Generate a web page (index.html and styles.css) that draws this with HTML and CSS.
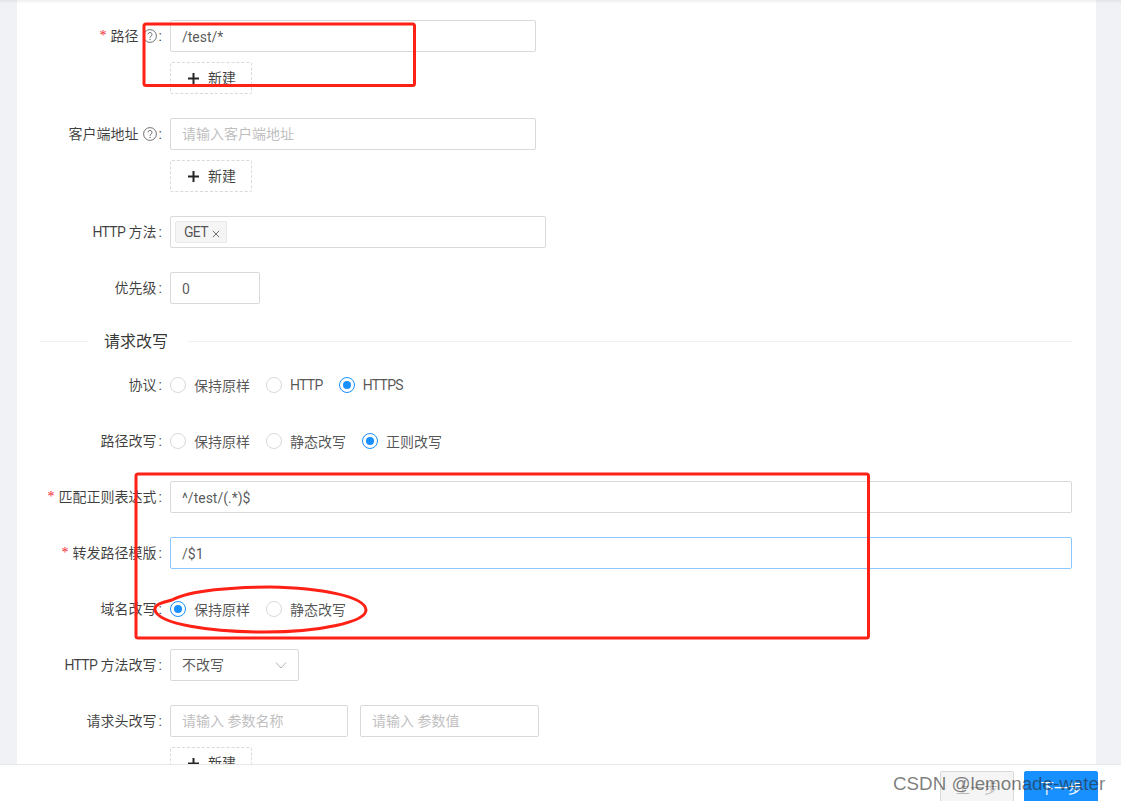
FILE: index.html
```html
<!DOCTYPE html>
<html lang="zh-CN">
<head>
<meta charset="utf-8">
<title>路由配置</title>
<link rel="stylesheet" href="styles.css">
</head>
<body>
<div class="page">
  <main class="main">
    <form class="form">
      <div class="row">
        <div class="label"><span class="req">*</span>路径<svg class="help" viewBox="0 0 14 14"><circle cx="7" cy="7" r="6.4"/><path d="M5 5.4a2 2 0 1 1 3 1.8c-.7.4-1 .8-1 1.6"/><circle class="dot" cx="7" cy="10.4" r=".7"/></svg><span class="colon">:</span></div>
        <div class="control">
          <div class="input w366 val">/test/*</div>
          <div class="add"><svg class="plus" viewBox="0 0 11 11"><path d="M5.500 0v11M0 5.500h11"/></svg><span class="add-text">新建</span></div>
        </div>
      </div>
      <div class="row">
        <div class="label">客户端地址<svg class="help" viewBox="0 0 14 14"><circle cx="7" cy="7" r="6.4"/><path d="M5 5.4a2 2 0 1 1 3 1.8c-.7.4-1 .8-1 1.6"/><circle class="dot" cx="7" cy="10.4" r=".7"/></svg><span class="colon">:</span></div>
        <div class="control">
          <div class="input w366 ph">请输入客户端地址</div>
          <div class="add"><svg class="plus" viewBox="0 0 11 11"><path d="M5.500 0v11M0 5.500h11"/></svg><span class="add-text">新建</span></div>
        </div>
      </div>
      <div class="row">
        <div class="label"><span class="caps">HTTP</span>&nbsp;方法<span class="colon">:</span></div>
        <div class="control">
          <div class="input w376 multi"><span class="tag"><span class="caps">GET</span><svg class="x" viewBox="0 0 8 8"><path d="M.8.8l6.4 6.4M7.2.8L.8 7.2"/></svg></span></div>
        </div>
      </div>
      <div class="row">
        <div class="label">优先级<span class="colon">:</span></div>
        <div class="control"><div class="input w90 val">0</div></div>
      </div>
      <div class="divider"><span class="line short"></span><span class="divider-text">请求改写</span><span class="line"></span></div>
      <div class="row">
        <div class="label">协议<span class="colon">:</span></div>
        <div class="control radios">
          <span class="radio"><i class="dotbox"></i>保持原样</span>
          <span class="radio"><i class="dotbox"></i><span class="caps">HTTP</span></span>
          <span class="radio"><i class="dotbox on"></i><span class="caps">HTTPS</span></span>
        </div>
      </div>
      <div class="row">
        <div class="label">路径改写<span class="colon">:</span></div>
        <div class="control radios">
          <span class="radio"><i class="dotbox"></i>保持原样</span>
          <span class="radio"><i class="dotbox"></i>静态改写</span>
          <span class="radio"><i class="dotbox on"></i>正则改写</span>
        </div>
      </div>
      <div class="row">
        <div class="label"><span class="req">*</span>匹配正则表达式<span class="colon">:</span></div>
        <div class="control"><div class="input val">^/test/(.*)$</div></div>
      </div>
      <div class="row">
        <div class="label"><span class="req">*</span>转发路径模版<span class="colon">:</span></div>
        <div class="control"><div class="input focus val">/$1</div></div>
      </div>
      <div class="row">
        <div class="label">域名改写<span class="colon">:</span></div>
        <div class="control radios">
          <span class="radio"><i class="dotbox on"></i>保持原样</span>
          <span class="radio"><i class="dotbox"></i>静态改写</span>
        </div>
      </div>
      <div class="row">
        <div class="label"><span class="caps">HTTP</span>&nbsp;方法改写<span class="colon">:</span></div>
        <div class="control">
          <div class="input w129 select">不改写<svg class="chev" viewBox="0 0 12 8"><path d="M1 1.5l5 5.5 5-5.5"/></svg></div>
        </div>
      </div>
      <div class="row">
        <div class="label">请求头改写<span class="colon">:</span></div>
        <div class="control">
          <div class="pair">
            <div class="input w178 ph">请输入 参数名称</div>
            <div class="input w179 ph">请输入 参数值</div>
          </div>
          <div class="add"><svg class="plus" viewBox="0 0 11 11"><path d="M5.500 0v11M0 5.500h11"/></svg><span class="add-text">新建</span></div>
        </div>
      </div>
    </form>
    <div class="topshade"></div>
  </main>
  <footer class="footer">
    <button class="btn" type="button">上一步</button>
    <button class="btn primary" type="button">下一步</button>
  </footer>
  <svg class="marks" viewBox="0 0 1121 801">
    <rect x="144" y="24" width="270.500" height="61.500" rx="2"/>
    <rect x="136" y="474" width="732.500" height="164" rx="2"/>
    <path d="M172 600C190 590 235 587 270 587C320 588 365 596 366 610C366 622 320 632 265 632C210 632 158 624 155 610C154 605 160 603 172 600Z"/>
  </svg>
  <div class="watermark">CSDN @lemonade-water</div>
</div>
</body>
</html>
```

FILE: styles.css
```css
* { box-sizing: border-box; }
html, body { margin: 0; height: 100%; overflow: hidden; }
body {
  font-family: Roboto, "Noto Sans CJK SC", sans-serif;
  font-size: 14px;
  color: rgba(0, 0, 0, .68);
}
.page {
  position: relative;
  width: 1121px;
  height: 801px;
  display: flex;
  flex-direction: column;
  overflow: hidden;
}
.main {
  position: relative;
  height: 764px;
  flex: none;
  overflow: hidden;
  background: #f0f2f5;
  padding: 0 25px 0 17px;
}
.topshade {
  position: absolute;
  left: 0;
  right: 0;
  top: 0;
  height: 4px;
  background: linear-gradient(rgba(0, 0, 0, .06), rgba(0, 0, 0, 0));
}
.form {
  background: #fff;
  height: 100%;
  padding: 20px 24px 0 23px;
  display: flex;
  flex-direction: column;
  gap: 24px;
}
.row {
  display: grid;
  grid-template-columns: 130px 1fr;
  flex: none;
}
.label {
  height: 32px;
  line-height: 32px;
  padding-right: 8px;
  white-space: nowrap;
  color: rgba(0, 0, 0, .75);
  display: flex;
  justify-content: flex-end;
  align-items: center;
}
.colon { margin: 0 0 0 2px; }
.caps { letter-spacing: -.7px; }
.req {
  color: #f5222d;
  margin-right: 4px;
  font-family: "Liberation Serif", serif;
}
.help {
  width: 14px;
  height: 14px;
  margin: 0 0 0 4px;
  fill: none;
  stroke: rgba(0, 0, 0, .55);
  stroke-width: 1;
}
.help .dot { fill: rgba(0, 0, 0, .55); stroke: none; }
.control { display: flex; flex-direction: column; align-items: flex-start; gap: 10px; }
.input {
  width: 100%;
  height: 32px;
  line-height: 30px;
  border: 1px solid #d9d9d9;
  border-radius: 2px;
  padding: 0 11px;
  background: #fff;
  white-space: nowrap;
}
.val { padding-top: 1px; }
.ph { color: #bfbfbf; }
.focus { border-color: #8cc8ff; }
.w366 { width: 366px; }
.w376 { width: 376px; }
.w90 { width: 90px; }
.w129 { width: 129px; }
.w178 { width: 178px; }
.w179 { width: 179px; }
.multi { padding: 4px; display: flex; align-items: flex-start; }
.tag {
  display: inline-flex;
  align-items: center;
  height: 22px;
  padding: 0 6px 0 8px;
  gap: 4px;
  background: #f5f5f5;
  border: 1px solid #e8e8e8;
  border-radius: 2px;
  line-height: 20px;
}
.x { width: 8px; height: 8px; margin-top: 3px; fill: none; stroke: rgba(0, 0, 0, .55); stroke-width: 1; }
.select { display: flex; align-items: center; justify-content: space-between; }
.chev { width: 12px; height: 8px; fill: none; stroke: rgba(0, 0, 0, .3); stroke-width: 1; }
.add {
  width: 82px;
  height: 32px;
  border: 1px dashed #d9d9d9;
  border-radius: 2px;
  display: flex;
  align-items: center;
  padding-left: 17px;
  gap: 9px;
  color: rgba(0, 0, 0, .75);
}
.add-text { padding-bottom: 2px; }
.plus { width: 11px; height: 11px; fill: none; stroke: rgba(0, 0, 0, .85); stroke-width: 2; }
.pair { display: flex; gap: 12px; }
.divider {
  display: flex;
  align-items: center;
  height: 26px;
  margin: 0 0 -9px;
  font-size: 16px;
  color: rgba(0, 0, 0, .8);
  flex: none;
}
.line { flex: 1; height: 1px; background: #f0f0f0; }
.line.short { flex: none; width: 48px; }
.divider-text { padding: 0 20px 2px 16px; }
.radios { flex-direction: row; align-items: center; gap: 16px; height: 32px; }
.radio { display: inline-flex; align-items: center; gap: 8px; white-space: nowrap; }
.dotbox {
  position: relative;
  width: 16px;
  height: 16px;
  border: 1px solid #d9d9d9;
  border-radius: 50%;
  background: #fff;
}
.dotbox.on { border-color: #1890ff; }
.dotbox.on::after {
  content: "";
  position: absolute;
  left: 3px;
  top: 3px;
  width: 8px;
  height: 8px;
  border-radius: 50%;
  background: #1890ff;
}
.footer {
  flex: 1;
  background: #fff;
  border-top: 1px solid #e8e8e8;
  position: relative;
  z-index: 1;
  display: flex;
  justify-content: flex-end;
  gap: 10px;
  padding: 6px 23px 0 0;
  align-items: flex-start;
}
.btn {
  flex: none;
  width: 74px;
  height: 32px;
  border: 1px solid #d9d9d9;
  border-radius: 2px;
  background: #f5f5f5;
  color: rgba(0, 0, 0, .25);
  font: inherit;
  padding: 0;
}
.btn.primary { background: #1890ff; border-color: #1890ff; color: #fff; }
.marks {
  position: absolute;
  left: 0;
  top: 0;
  width: 1121px;
  height: 801px;
  z-index: 2;
  fill: none;
  stroke: #ff2116;
  stroke-width: 3;
  pointer-events: none;
}
.watermark {
  position: absolute;
  z-index: 3;
  left: 893px;
  top: 773px;
  font-family: "Liberation Sans", Arial, sans-serif;
  font-size: 18.8px;
  line-height: 22px;
  color: rgba(40, 40, 40, .6);
  white-space: nowrap;
}
```
